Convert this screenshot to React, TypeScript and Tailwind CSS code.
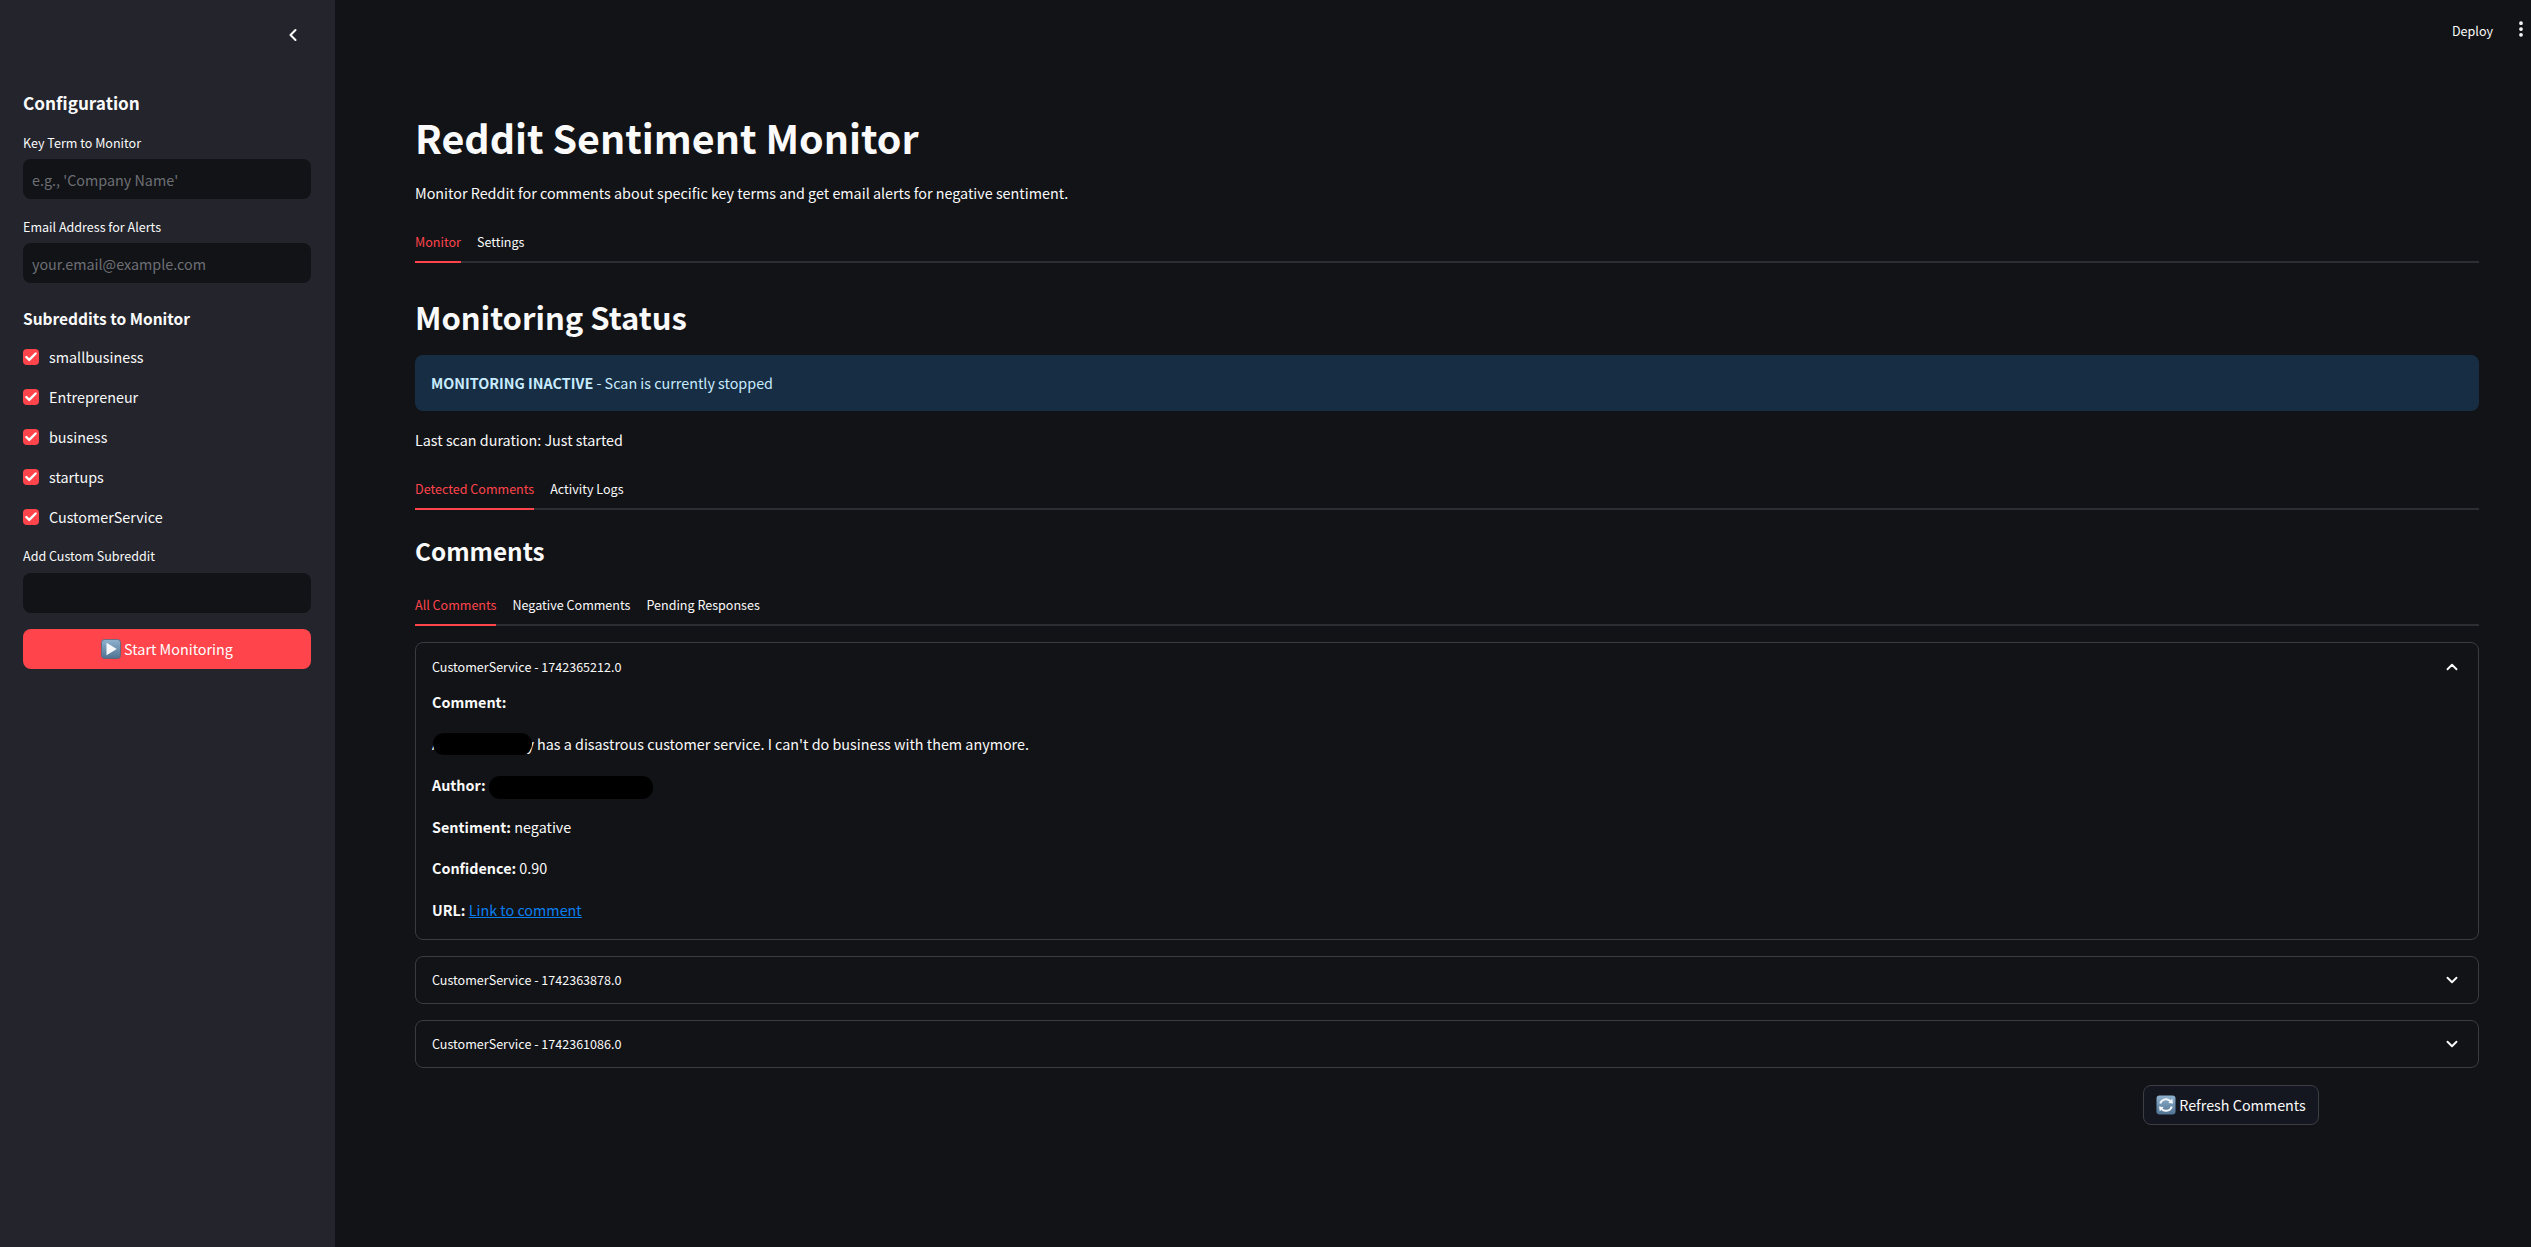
import { Check, ChevronDown, ChevronLeft, ChevronUp, EllipsisVertical } from "lucide-react";
import React from "react";

const subreddits = ["smallbusiness", "Entrepreneur", "business", "startups", "CustomerService"];

function PlayEmoji() {
  return (
    <svg viewBox="0 0 20 20" className="h-5 w-5 shrink-0">
      <defs>
        <linearGradient id="playBg" x1="0" y1="0" x2="0" y2="1">
          <stop offset="0" stopColor="#8fb2cf" />
          <stop offset="1" stopColor="#4f7391" />
        </linearGradient>
      </defs>
      <rect x="0.5" y="0.5" width="19" height="19" rx="3" fill="url(#playBg)" stroke="#54697c" strokeWidth="0.8" />
      <path d="M5.5 3.8 L15.8 10 L5.5 16.2 Z" fill="#f4f7fa" />
    </svg>
  );
}

function RefreshEmoji() {
  return (
    <svg viewBox="0 0 20 20" className="h-5 w-5 shrink-0">
      <defs>
        <linearGradient id="refreshBg" x1="0" y1="0" x2="0" y2="1">
          <stop offset="0" stopColor="#8fb2cf" />
          <stop offset="1" stopColor="#4f7391" />
        </linearGradient>
      </defs>
      <rect x="0.5" y="0.5" width="19" height="19" rx="3" fill="url(#refreshBg)" />
      <path d="M4.2 8.6 A6 6 0 0 1 14.6 6.4" fill="none" stroke="#f4f7fa" strokeWidth="2" />
      <path d="M12.4 8 L17 8.4 L16.2 3.6 Z" fill="#f4f7fa" />
      <path d="M15.8 11.4 A6 6 0 0 1 5.4 13.6" fill="none" stroke="#f4f7fa" strokeWidth="2" />
      <path d="M7.6 12 L3 11.6 L3.8 16.4 Z" fill="#f4f7fa" />
    </svg>
  );
}

function Field({ label, placeholder, labelGap }: { label: string; placeholder?: string; labelGap: string }) {
  return (
    <div>
      <label className="block text-[12.55px] leading-[20px] text-[#fafafa]">{label}</label>
      <input
        placeholder={placeholder}
        className={`${labelGap} block h-10 w-full rounded-lg bg-[#121317] px-[9px] text-[14.35px] text-[#fafafa] outline-none placeholder:text-[#6d6f75]`}
      />
    </div>
  );
}

function Tabs({ items }: { items: string[] }) {
  return (
    <div className="flex h-10 gap-4 border-b-2 border-[#2d2e34]">
      {items.map((item, i) => (
        <div
          key={item}
          className={
            i === 0
              ? "-mb-[2px] flex h-10 items-center border-b-2 border-[#ff444b] text-[12.55px] text-[#ff444b]"
              : "flex h-[38px] items-center text-[12.55px] text-[#fafafa]"
          }
        >
          {item}
        </div>
      ))}
    </div>
  );
}

function Collapsed({ title }: { title: string }) {
  return (
    <div className="mt-4 flex h-[48px] items-center justify-between rounded-lg border border-[#3a3b41] pl-4 pr-[17px] text-[12.55px] text-[#fafafa]">
      <span>{title}</span>
      <ChevronDown className="h-[18px] w-[18px]" strokeWidth={2.5} />
    </div>
  );
}

export default function App() {
  return (
    <div
      className="flex min-h-[1247px] bg-[#121317] text-[14.35px] leading-[24px] text-[#fafafa]"
      style={{ fontFamily: '"Noto Sans CJK SC", "Noto Sans", sans-serif' }}
    >
      <aside className="w-[335px] shrink-0 bg-[#23242c] pl-[23px] pr-[24px]">
        <div className="flex h-[87px] justify-end pr-[8px] pt-[25px]">
          <ChevronLeft className="h-5 w-5" strokeWidth={2.5} />
        </div>
        <h2 className="text-[17.2px] font-bold leading-[32px]">Configuration</h2>
        <div className="mt-[14px]">
          <Field label="Key Term to Monitor" placeholder="e.g., 'Company Name'" labelGap="mt-[6px]" />
        </div>
        <div className="mt-[18px]">
          <Field label="Email Address for Alerts" placeholder="your.email@example.com" labelGap="mt-[6px]" />
        </div>
        <h3 className="mt-[21px] text-[15.5px] font-bold leading-[28px]">Subreddits to Monitor</h3>
        <div className="mt-[13px] flex flex-col gap-4">
          {subreddits.map((name) => (
            <div key={name} className="flex h-6 items-center gap-[10px]">
              <span className="flex h-4 w-4 items-center justify-center rounded-[4px] bg-[#ff444b]">
                <Check className="h-[14px] w-[14px] text-white" strokeWidth={4} />
              </span>
              {name}
            </div>
          ))}
        </div>
        <div className="mt-[17px]">
          <Field label="Add Custom Subreddit" labelGap="mt-[7px]" />
        </div>
        <button className="mt-4 flex h-10 w-full items-center justify-center gap-[3px] rounded-lg bg-[#ff444b] text-white">
          <PlayEmoji />
          Start Monitoring
        </button>
      </aside>

      <main className="min-w-0 flex-1 pl-[80px] pr-[52px]">
        <header className="-mr-[52px] flex h-[64px] items-start justify-end pt-[19px]">
          <span className="text-[12.55px] leading-[24px]">Deploy</span>
          <EllipsisVertical className="ml-[18px] h-5 w-5" strokeWidth={2.5} />
        </header>

        <h1 className="mt-[43px] text-[39.4px] font-bold leading-[60px]">Reddit Sentiment Monitor</h1>
        <p className="mt-[14px]">Monitor Reddit for comments about specific key terms and get email alerts for negative sentiment.</p>

        <div className="mt-[18px]">
          <Tabs items={["Monitor", "Settings"]} />
        </div>

        <h2 className="mt-[30px] text-[31px] font-bold leading-[48px]">Monitoring Status</h2>
        <div className="mt-[14px] flex h-14 items-center rounded-lg bg-[#172d43] px-4 text-[#c7ebff]">
          <span>
            <strong className="font-bold">MONITORING INACTIVE</strong> - Scan is currently stopped
          </span>
        </div>
        <p className="mt-[17px]">Last scan duration: Just started</p>

        <div className="mt-[18px]">
          <Tabs items={["Detected Comments", "Activity Logs"]} />
        </div>

        <h3 className="mt-[21px] text-[24.3px] font-bold leading-[40px]">Comments</h3>

        <div className="mt-[15px]">
          <Tabs items={["All Comments", "Negative Comments", "Pending Responses"]} />
        </div>

        <section className="mt-4 h-[298px] rounded-lg border border-[#3a3b41]">
          <div className="flex h-[47px] items-center justify-between pl-4 pr-[17px] text-[12.55px]">
            <span>CustomerService - 1742365212.0</span>
            <ChevronUp className="h-[18px] w-[18px]" strokeWidth={2.5} />
          </div>
          <div className="flex flex-col gap-[17.6px] px-4">
            <p className="font-bold">Comment:</p>
            <p>
              <span className="relative mr-[3px] inline-flex w-[102px] justify-between">
                <span>A</span>
                <span>y</span>
                <span className="absolute left-[1px] top-[1px] h-[22px] w-[99px] rounded-[11px] bg-black" />
              </span>
              has a disastrous customer service. I can't do business with them anymore.
            </p>
            <p>
              <strong className="font-bold">Author:</strong>
              <span className="relative ml-[2px] inline-block w-[168px]">
                <span className="absolute left-[1px] top-[-15px] h-[23px] w-[164px] rounded-[11px] bg-black" />
              </span>
            </p>
            <p>
              <strong className="font-bold">Sentiment:</strong> negative
            </p>
            <p>
              <strong className="font-bold">Confidence:</strong> 0.90
            </p>
            <p>
              <strong className="font-bold">URL:</strong>{" "}
              <a href="#" className="text-[#0a7ff0] underline">
                Link to comment
              </a>
            </p>
          </div>
        </section>

        <Collapsed title="CustomerService - 1742363878.0" />
        <Collapsed title="CustomerService - 1742361086.0" />

        <button className="ml-auto mr-[160px] mt-[17px] flex h-10 w-[176px] items-center justify-center gap-[3px] rounded-lg border border-[#3d3e45] bg-[#141720]">
          <RefreshEmoji />
          Refresh Comments
        </button>
      </main>
    </div>
  );
}
